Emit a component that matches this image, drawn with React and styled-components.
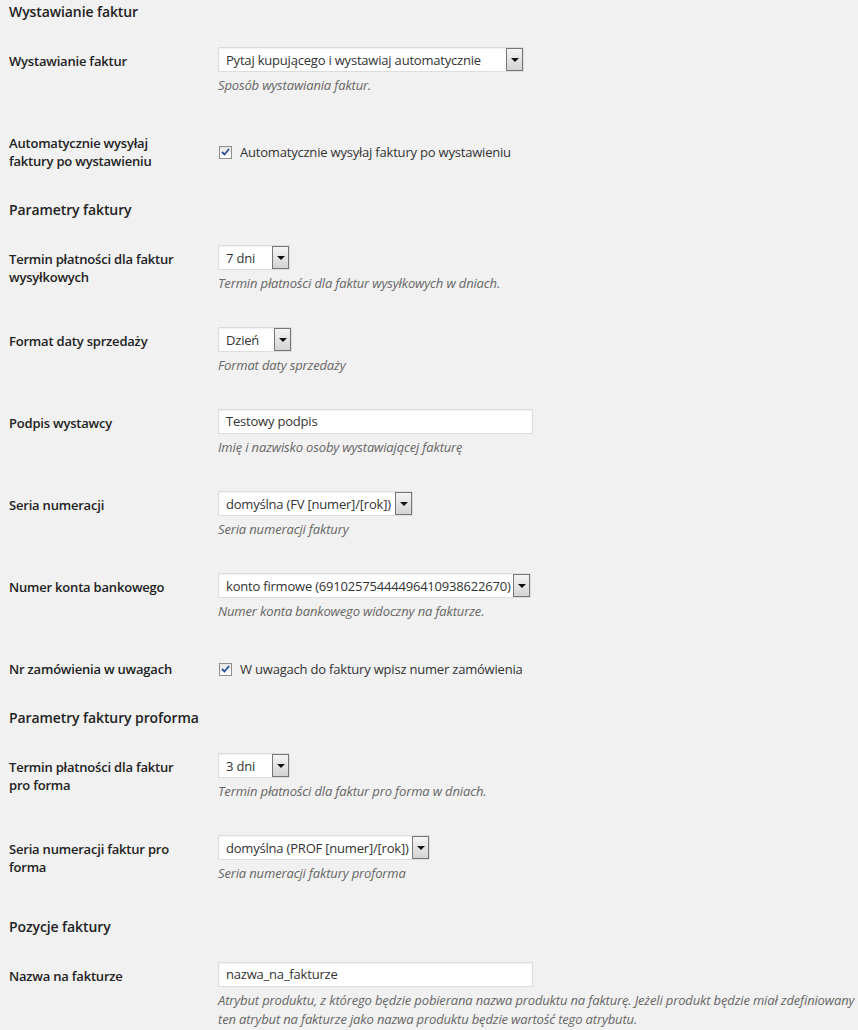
import React from "react";
import styled, { createGlobalStyle } from "styled-components";

const GlobalStyle = createGlobalStyle`
  html, body {
    margin: 0;
    padding: 0;
    background: #f1f1f1;
  }
  body {
    font-family: "Open Sans", "Noto Sans", sans-serif;
    color: #444;
  }
`;

const Page = styled.div`
  padding: 2px 0 20px 9px;
  width: 858px;
  box-sizing: border-box;
`;

const Heading = styled.h3`
  margin: 0 0 10px;
  padding-top: ${p => (p.$first ? 0 : 10 + (p.$extra || 0))}px;
  font-size: 14px;
  line-height: 20px;
  letter-spacing: -0.1px;
  font-weight: 600;
  color: #222;
`;

const Table = styled.table`
  border-collapse: collapse;
  width: 100%;
  table-layout: fixed;
`;

const Label = styled.th`
  width: 209px;
  box-sizing: border-box;
  padding: 20px 29px 20px 0;
  text-align: left;
  vertical-align: top;
  font-size: 13px;
  line-height: 18px;
  letter-spacing: -0.2px;
  font-weight: 600;
  color: #222;
`;

const Field = styled.td`
  padding: 15px 0 15px 0;
  vertical-align: middle;
`;

const SelectBox = styled.div`
  display: flex;
  align-items: center;
  justify-content: space-between;
  box-sizing: border-box;
  width: ${p => p.$w}px;
  height: 25px;
  background: #fff;
  border: 1px solid #ddd;
  box-shadow: inset 0 1px 2px rgba(0, 0, 0, 0.07);
  padding: 0 0 0 7px;
  font-size: 13px;
  letter-spacing: -0.2px;
  color: #333;
  white-space: nowrap;
`;

const ArrowButton = styled.span`
  display: flex;
  align-items: center;
  justify-content: center;
  box-sizing: border-box;
  width: 17px;
  height: 23px;
  border: 1px solid #767676;
  background: linear-gradient(#f4f4f4, #d4d4d4);
  flex: none;

  &::after {
    content: "";
    border-left: 4px solid transparent;
    border-right: 4px solid transparent;
    border-top: 4px solid #111;
  }
`;

const TextInput = styled.div`
  box-sizing: border-box;
  width: ${p => p.$w}px;
  height: 25px;
  background: #fff;
  border: 1px solid #ddd;
  box-shadow: inset 0 1px 2px rgba(0, 0, 0, 0.07);
  padding: 0 7px;
  font-size: 13px;
  letter-spacing: -0.2px;
  line-height: 23px;
  color: #333;
`;

const Description = styled.p`
  margin: 4px 0 4px;
  font-size: 13px;
  line-height: 19px;
  letter-spacing: -0.15px;
  font-style: italic;
  color: #666;
`;

const CheckRow = styled.label`
  display: flex;
  align-items: center;
  gap: 8px;
  padding-left: 1px;
  font-size: 13px;
  letter-spacing: -0.2px;
  color: #333;
`;

const CheckBox = styled.span`
  display: flex;
  align-items: center;
  justify-content: center;
  box-sizing: border-box;
  width: 13px;
  height: 13px;
  border: 1px solid #8f8f8f;
  background: linear-gradient(#e6e6e6, #fff);
  flex: none;
`;

const Select = ({ value, w }) => (
  <SelectBox $w={w}>
    <span>{value}</span>
    <ArrowButton />
  </SelectBox>
);

const Check = ({ text }) => (
  <CheckRow>
    <CheckBox>
      <svg width="9" height="8" viewBox="0 0 9 8">
        <path d="M1 4 L3.5 6.5 L8 1" fill="none" stroke="#2a4f9a" strokeWidth="1.8" />
      </svg>
    </CheckBox>
    {text}
  </CheckRow>
);

const Row = ({ label, children, desc }) => (
  <tr>
    <Label>{label}</Label>
    <Field>
      {children}
      {desc && <Description>{desc}</Description>}
    </Field>
  </tr>
);

export default function App() {
  return (
    <Page>
      <GlobalStyle />
      <Heading $first>Wystawianie faktur</Heading>
      <Table>
        <tbody>
          <Row label="Wystawianie faktur" desc="Sposób wystawiania faktur.">
            <Select value="Pytaj kupującego i wystawiaj automatycznie" w={306} />
          </Row>
          <Row label="Automatycznie wysyłaj faktury po wystawieniu">
            <Check text="Automatycznie wysyłaj faktury po wystawieniu" />
          </Row>
        </tbody>
      </Table>

      <Heading>Parametry faktury</Heading>
      <Table>
        <tbody>
          <Row
            label="Termin płatności dla faktur wysyłkowych"
            desc="Termin płatności dla faktur wysyłkowych w dniach."
          >
            <Select value="7 dni" w={72} />
          </Row>
          <Row label="Format daty sprzedaży" desc="Format daty sprzedaży">
            <Select value="Dzień" w={74} />
          </Row>
          <Row label="Podpis wystawcy" desc="Imię i nazwisko osoby wystawiającej fakturę">
            <TextInput $w={315}>Testowy podpis</TextInput>
          </Row>
          <Row label="Seria numeracji" desc="Seria numeracji faktury">
            <Select value="domyślna (FV [numer]/[rok])" w={195} />
          </Row>
          <Row label="Numer konta bankowego" desc="Numer konta bankowego widoczny na fakturze.">
            <Select value="konto firmowe (69102575444496410938622670)" w={313} />
          </Row>
          <Row label="Nr zamówienia w uwagach">
            <Check text="W uwagach do faktury wpisz numer zamówienia" />
          </Row>
        </tbody>
      </Table>

      <Heading>Parametry faktury proforma</Heading>
      <Table>
        <tbody>
          <Row
            label="Termin płatności dla faktur pro forma"
            desc="Termin płatności dla faktur pro forma w dniach."
          >
            <Select value="3 dni" w={72} />
          </Row>
          <Row
            label="Seria numeracji faktur pro forma"
            desc="Seria numeracji faktury proforma"
          >
            <Select value="domyślna (PROF [numer]/[rok])" w={212} />
          </Row>
        </tbody>
      </Table>

      <Heading $extra={5}>Pozycje faktury</Heading>
      <Table>
        <tbody>
          <Row
            label="Nazwa na fakturze"
            desc="Atrybut produktu, z którego będzie pobierana nazwa produktu na fakturę. Jeżeli produkt będzie miał zdefiniowany ten atrybut na fakturze jako nazwa produktu będzie wartość tego atrybutu."
          >
            <TextInput $w={315}>nazwa_na_fakturze</TextInput>
          </Row>
        </tbody>
      </Table>
    </Page>
  );
}
